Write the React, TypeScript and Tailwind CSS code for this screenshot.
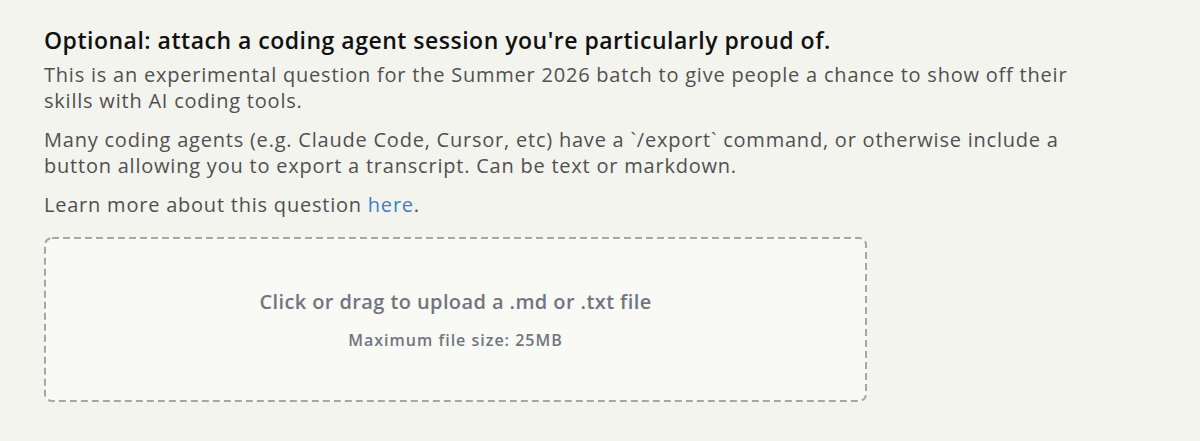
import React from "react";

export default function App() {
  return (
    <div
      className="min-h-screen w-full bg-[#f4f4ef] pl-[44px] pr-[44px] pt-[26px]"
      style={{ fontFamily: "'Open Sans', Lato, sans-serif" }}
    >
      <h2 className="text-[23px] leading-[28px] font-semibold tracking-[0.5px] text-[#111111]">
        Optional: attach a coding agent session you're particularly proud of.
      </h2>
      <p className="mt-[8px] text-[20px] leading-[26px] tracking-[0.78px] text-[#505050]">
        This is an experimental question for the Summer 2026 batch to give people a chance to show off their
        <br />
        skills with AI coding tools.
      </p>
      <p className="mt-[13px] text-[20px] leading-[26px] tracking-[0.78px] text-[#505050]">
        Many coding agents (e.g. Claude Code, Cursor, etc) have a `/export` command, or otherwise include a
        <br />
        button allowing you to export a transcript. Can be text or markdown.
      </p>
      <p className="mt-[13px] text-[20px] leading-[26px] tracking-[0.78px] text-[#505050]">
        Learn more about this question <a className="text-[#3b7fc4]">here</a>.
      </p>
      <div className="relative mt-[19px] flex h-[165px] w-[823px] flex-col items-center justify-center rounded-lg bg-[#f9f9f6]">
        <svg className="pointer-events-none absolute inset-0 h-full w-full" aria-hidden="true">
          <rect
            x="1"
            y="1"
            width="821"
            height="163"
            rx="7"
            ry="7"
            fill="none"
            stroke="#a6a6a6"
            strokeWidth="2"
            strokeDasharray="7 4"
          />
        </svg>
        <div className="text-[20px] leading-[28px] font-semibold tracking-[0.4px] text-[#71757f]">
          Click or drag to upload a .md or .txt file
        </div>
        <div className="mt-[12px] text-[16px] leading-[24px] font-semibold tracking-[1px] text-[#71757f]">
          Maximum file size: 25MB
        </div>
      </div>
    </div>
  );
}
